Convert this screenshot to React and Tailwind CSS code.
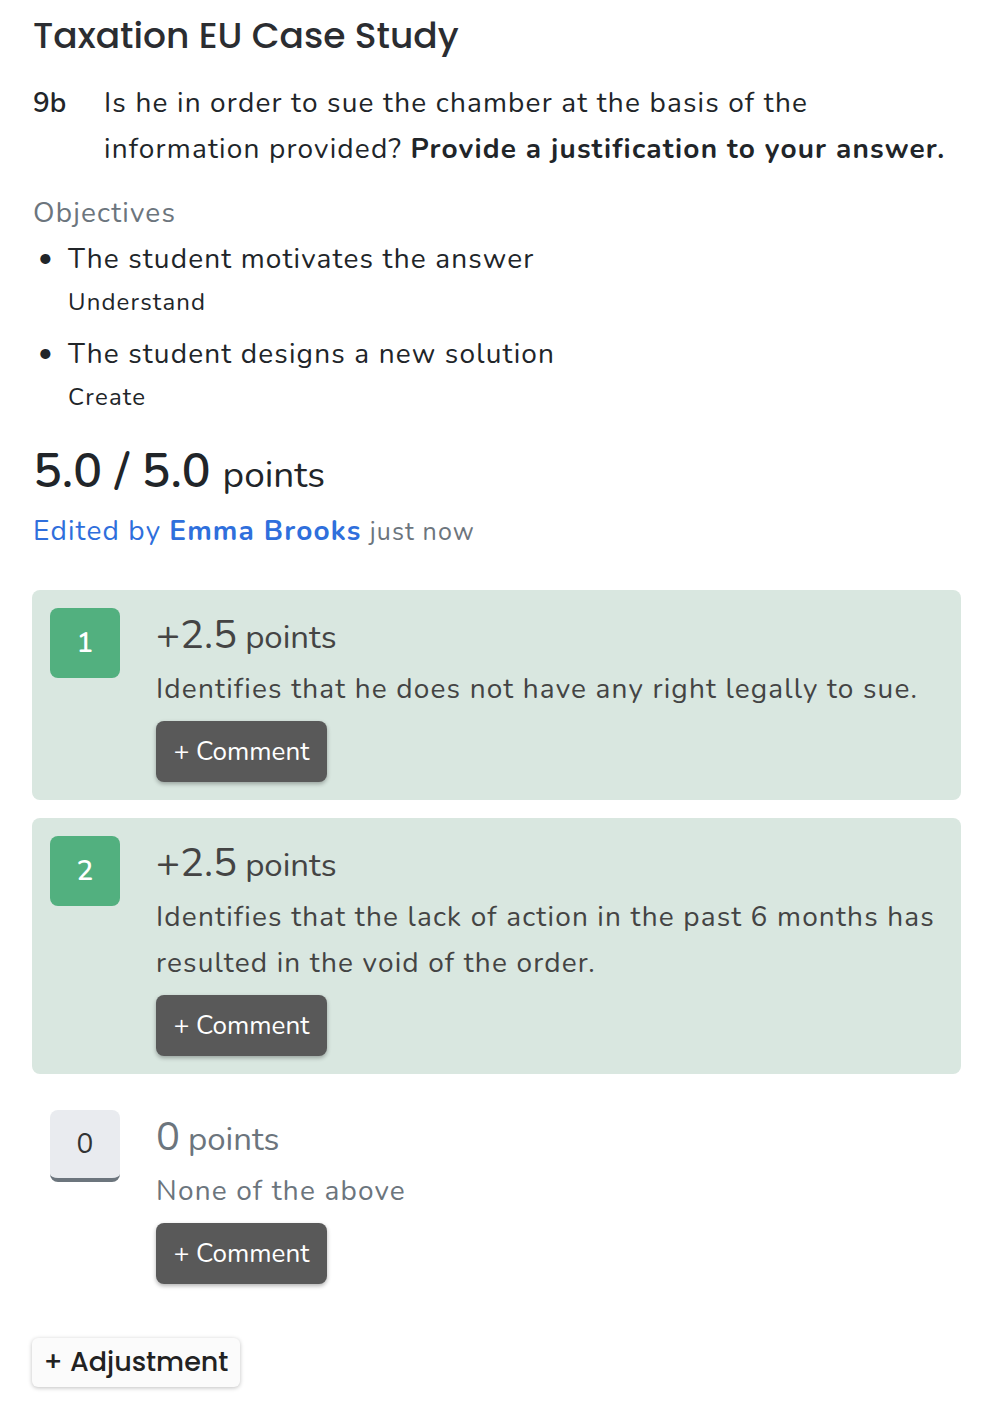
const body = { fontFamily: 'Nunito, Lato, "Open Sans", sans-serif' }
const head = { fontFamily: 'Poppins, "Open Sans", Lato, sans-serif' }

function CommentButton() {
  return (
    <button className="h-[61px] w-[171px] rounded-lg bg-[#595959] text-[26px] text-white shadow-[0_2px_4px_rgba(0,0,0,0.3)]">
      + Comment
    </button>
  )
}

function Criterion({ num, points, text, active }) {
  return (
    <div className={`flex gap-9 rounded-lg p-[18px] ${active ? 'bg-[#d9e7e0]' : ''}`}>
      {active ? (
        <div className="flex h-[70px] w-[70px] shrink-0 items-center justify-center rounded-lg bg-[#52b07f] text-[28px] font-semibold text-white">
          {num}
        </div>
      ) : (
        <div className="flex h-[72px] w-[70px] shrink-0 items-center justify-center rounded-lg border-b-4 border-[#6c757d] bg-[#e9ebef] text-[28px] text-[#333]">
          {num}
        </div>
      )}
      <div className="flex-1">
        <div className={`flex h-[58px] items-baseline ${active ? 'text-[#444]' : 'text-[#6c757d]'}`}>
          <span className="text-[40px] leading-[54px]">{points}</span>
          <span className="ml-2 text-[33px]">points</span>
        </div>
        <p className={`text-[28px] leading-[46px] tracking-[0.042em] ${active ? 'text-[#444]' : 'text-[#6c757d]'}`}>{text}</p>
        <div className="mt-[9px]">
          <CommentButton />
        </div>
      </div>
    </div>
  )
}

export default function App() {
  return (
    <div className="min-h-screen bg-white px-[33px] pb-10 pt-[8px] text-[#212529]" style={body}>
      <h1 className="text-[36px] font-medium leading-[56px] text-[#2b2d31]" style={head}>Taxation EU Case Study</h1>

      <div className="mt-[16px] flex text-[28px] leading-[46px] tracking-[0.042em]">
        <span className="w-[71px] shrink-0 font-semibold tracking-normal">9b</span>
        <p>
          Is he in order to sue the chamber at the basis of the information provided?{' '}
          <b className="font-bold">Provide a justification to your answer.</b>
        </p>
      </div>

      <h2 className="mt-[18px] text-[28px] leading-[46px] tracking-[0.042em] text-[#6c757d]">Objectives</h2>
      <ul className="text-[28px] tracking-[0.042em]">
        <li className="flex">
          <span className="w-[35px] shrink-0 pl-[5px]">•</span>
          <div>
            <div className="leading-[46px]">The student motivates the answer</div>
            <div className="text-[24px] leading-[40px]">Understand</div>
          </div>
        </li>
        <li className="mt-[9px] flex">
          <span className="w-[35px] shrink-0 pl-[5px]">•</span>
          <div>
            <div className="leading-[46px]">The student designs a new solution</div>
            <div className="text-[24px] leading-[40px]">Create</div>
          </div>
        </li>
      </ul>

      <div className="mt-[24px] flex items-baseline">
        <span className="text-[48px] font-semibold leading-[60px]">5.0 / 5.0</span>
        <span className="ml-3 text-[37px]">points</span>
      </div>
      <div className="mt-[4px] flex items-baseline text-[28px] leading-[46px] tracking-[0.042em] text-[#2f6fdc]">
        <span>Edited by</span>
        <b className="ml-2 font-bold">Emma Brooks</b>
        <span className="ml-2 text-[25px] text-[#6c757d]">just now</span>
      </div>

      <div className="-ml-px mr-[-12px] mt-[35px] flex flex-col gap-[18px]">
        <Criterion num="1" points="+2.5" active text="Identifies that he does not have any right legally to sue." />
        <Criterion num="2" points="+2.5" active text="Identifies that the lack of action in the past 6 months has resulted in the void of the order." />
        <Criterion num="0" points="0" text="None of the above" />
      </div>

      <button
        className="-ml-px mt-[36px] h-[49px] w-[208px] rounded-md bg-[#fbfbfb] text-[27px] font-medium text-[#222] shadow-[0_1px_4px_rgba(0,0,0,0.25)]"
        style={head}
      >
        + Adjustment
      </button>
    </div>
  )
}
